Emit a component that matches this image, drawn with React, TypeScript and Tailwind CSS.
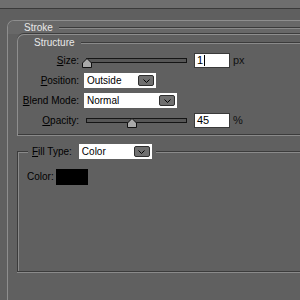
import { ReactNode } from "react";

function Etch({ className = "" }: { className?: string }) {
  return <div className={`h-[2px] border-t border-[#3b3b3b] bg-[#8a8a8a] ${className}`} />;
}

function Label({ children }: { children: ReactNode }) {
  return <div className="w-[61px] shrink-0 text-right text-black">{children}</div>;
}

function Thumb({ left }: { left: number }) {
  return (
    <svg
      width="10"
      height="10"
      viewBox="0 0 10 10"
      className="absolute top-[5px]"
      style={{ left: left + "px" }}
    >
      <polygon points="5,0.5 9.5,5 9.5,9.5 0.5,9.5 0.5,5" fill="#a9a9a9" stroke="#111" />
    </svg>
  );
}

function Slider({ value }: { value: number }) {
  return (
    <div className="relative ml-[3px] w-[105px] h-[15px] pt-[5px]">
      <div className="ml-[4px] w-[101px] h-[5px] border border-[#151515] bg-[#575757]" />
      <Thumb left={value} />
    </div>
  );
}

function Select({ value, className }: { value: string; className: string }) {
  return (
    <div className={`flex items-center h-[15px] bg-white pl-[3px] pr-[2px] ${className}`}>
      <span className="flex-1 text-black">{value}</span>
      <div className="w-[16px] h-[11px] flex items-center justify-center rounded-[2px] border border-[#2e2e2e] bg-[#6f6f6f]">
        <svg width="7" height="4" viewBox="0 0 7 4">
          <path d="M0.5 0.5 L3.5 3.5 L6.5 0.5" stroke="#000" fill="none" />
        </svg>
      </div>
    </div>
  );
}

function NumberBox({ value, unit, caret }: { value: string; unit: string; caret?: boolean }) {
  return (
    <>
      <div className="ml-[7px] w-[36px] h-[15px] bg-white border border-[#3a3a3a] flex items-center pl-[2px] text-black text-[11px]">
        {value}
        {caret && <span className="w-px h-[11px] bg-black ml-[1px]" />}
      </div>
      <span className="ml-[3px] text-[#111] text-[11px]">{unit}</span>
    </>
  );
}

export default function App() {
  return (
    <div className="w-[300px] h-[300px] overflow-hidden bg-[#606060] flex flex-col font-['Liberation_Sans',Arial,sans-serif] text-[10px] leading-none">
      <div className="h-[8px] shrink-0 bg-[#6e6e6e]" />
      <div className="h-[1px] shrink-0 bg-[#3a3a3a]" />
      <div className="h-[11px] shrink-0 bg-[#5f5f5f]" />

      {/* Stroke */}
      <div className="ml-[7px] flex-1 flex flex-col border-l border-t border-[#8e8e8e] rounded-tl-[7px]">
        <div className="h-[13px] shrink-0 flex items-center pl-[16px] bg-[#686868] rounded-tl-[6px]">
          <span className="text-[#e8e8e8]">Stroke</span>
          <Etch className="flex-1 ml-[6px]" />
        </div>

        {/* Structure */}
        <div className="ml-[9px] flex flex-col border-l border-t border-[#8e8e8e] rounded-tl-[7px] shadow-[0_-1px_0_#3d3d3d]">
          <div className="h-[15px] flex items-center pl-[16px]">
            <span className="text-[#e8e8e8]">Structure</span>
            <Etch className="flex-1 ml-[6px]" />
          </div>

          <div className="mt-[3px] flex flex-col gap-[5px]">
            <div className="flex items-center h-[15px]">
              <Label>
                <u>S</u>ize:
              </Label>
              <Slider value={0} />
              <NumberBox value="1" unit="px" caret />
            </div>
            <div className="flex items-center h-[15px]">
              <Label>
                <u>P</u>osition:
              </Label>
              <Select value="Outside" className="ml-[5px] w-[72px]" />
            </div>
            <div className="flex items-center h-[15px]">
              <Label>
                <u>B</u>lend Mode:
              </Label>
              <Select value="Normal" className="ml-[5px] w-[93px]" />
            </div>
            <div className="flex items-center h-[15px]">
              <Label>
                <u>O</u>pacity:
              </Label>
              <Slider value={45} />
              <NumberBox value="45" unit="%" />
            </div>
          </div>

          <Etch className="mt-[6px]" />
        </div>

        {/* Fill Type */}
        <div className="relative mt-[15px] ml-[9px] h-[121px] shrink-0 border-t border-l border-b border-[#3b3b3b] shadow-[inset_1px_1px_0_#8a8a8a,0_1px_0_#8a8a8a] pl-[9px] pt-[17px]">
          <div className="absolute -top-[8px] left-[10px] h-[15px] px-[4px] flex items-center bg-[#606060]">
            <span className="text-black">
              <u>F</u>ill Type:
            </span>
            <Select value="Color" className="ml-[7px] w-[73px]" />
          </div>
          <div className="flex items-center">
            <span className="text-black">Color:</span>
            <div className="ml-[2px] w-[32px] h-[16px] bg-black" />
          </div>
        </div>
      </div>
    </div>
  );
}
